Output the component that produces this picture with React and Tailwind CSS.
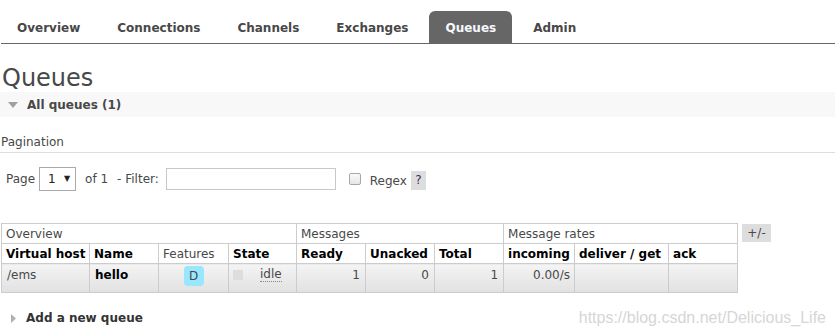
import React from "react";

const TABS = ["Overview", "Connections", "Channels", "Exchanges", "Queues", "Admin"];

function Down() {
  return (
    <svg width="10" height="6" viewBox="0 0 10 6" className="shrink-0">
      <path d="M0 0 L10 0 L5 6 Z" fill="#a0a0a0" />
    </svg>
  );
}

function Right() {
  return (
    <svg width="5" height="9" viewBox="0 0 5 9" className="shrink-0">
      <path d="M0 0 L5 4.5 L0 9 Z" fill="#b0b0b0" />
    </svg>
  );
}

export default function App() {
  const cell = "border border-[#cccccc] px-[4px] text-left";
  const data = "border border-[#cccccc] px-[5px] pt-[3px] align-top bg-linear-to-b from-[#f4f4f4] to-[#e1e1e1]";

  return (
    <div className="w-[835px] h-[333px] overflow-hidden bg-white text-[12px] leading-[16px] text-[#484848] font-['DejaVu_Sans',Verdana,sans-serif]">
      {/* tabs */}
      <nav className="pt-[11px] ml-[1px] flex gap-[5px] border-b border-[#666666]">
        {TABS.map(t => (
          <div key={t}
            className={
              "h-[32px] px-4 pt-[1px] flex items-center font-bold rounded-t-[6px] " +
              (t === "Queues" ? "bg-[#666666] text-[#f6f8ff]" : "text-[#484848]")
            }>
            {t}
          </div>
        ))}
      </nav>

      <h1 className="mt-[20px] ml-[2px] text-[24px] leading-[28px] font-normal text-[#484848]">Queues</h1>

      <div className="h-[25px] bg-[#f8f8f8] flex items-center pl-[8px] gap-[9px]">
        <Down />
        <span className="font-bold">All queues (1)</span>
      </div>

      <div className="mt-[17px] pb-[2px] pl-[1px] border-b border-[#dddddd]">Pagination</div>

      {/* pagination row */}
      <div className="mt-[14px] flex items-center h-[24px] pl-[6px]">
        <span>Page</span>
        <div className="ml-[4px] w-[37px] h-[24px] border border-[#aaaaaa] flex items-center justify-between pl-[8px] pr-[5px] text-[#222]">
          <span>1</span>
          <span className="text-[8px] leading-none">▼</span>
        </div>
        <span className="ml-[9px]">of 1</span>
        <span className="ml-[9px]">- Filter:</span>
        <div className="ml-[7px] w-[170px] h-[22px] border border-[#c8c8c8]"></div>
        <span className="ml-[13px] w-[12px] h-[12px] rounded-[2px] border border-[#a8a8a8] bg-linear-to-b from-[#fafafa] to-[#e6e6e6]"></span>
        <span className="ml-[9px] mt-[3px]">Regex</span>
        <span className="ml-[4px] mt-[2px] w-[15px] h-[19px] bg-[#dddddd] flex items-center justify-center text-[#3a2a6e]">?</span>
      </div>

      {/* table */}
      <div className="mt-[32px] ml-[1px] flex items-start gap-[4px]">
        <table className="table-fixed border-collapse w-[737px]">
          <colgroup>
            <col className="w-[88px]" />
            <col className="w-[69px]" />
            <col className="w-[70px]" />
            <col className="w-[68px]" />
            <col className="w-[69px]" />
            <col className="w-[69px]" />
            <col className="w-[69px]" />
            <col className="w-[71px]" />
            <col className="w-[94px]" />
            <col className="w-[69px]" />
          </colgroup>
          <thead>
            <tr className="h-[20px]">
              <th colSpan={4} className={cell + " font-normal"}>Overview</th>
              <th colSpan={3} className={cell + " font-normal"}>Messages</th>
              <th colSpan={3} className={cell + " font-normal"}>Message rates</th>
            </tr>
            <tr className="h-[20px] text-black">
              <th className={cell + " font-bold whitespace-nowrap"}>Virtual host</th>
              <th className={cell + " font-bold"}>Name</th>
              <th className={cell + " font-normal text-[#484848]"}>Features</th>
              <th className={cell + " font-bold"}>State</th>
              <th className={cell + " font-bold"}>Ready</th>
              <th className={cell + " font-bold"}>Unacked</th>
              <th className={cell + " font-bold"}>Total</th>
              <th className={cell + " font-bold"}>incoming</th>
              <th className={cell + " font-bold whitespace-nowrap"}>deliver / get</th>
              <th className={cell + " font-bold"}>ack</th>
            </tr>
          </thead>
          <tbody>
            <tr className="h-[29px]">
              <td className={data}>/ems</td>
              <td className={data + " font-bold text-black"}>hello</td>
              <td className={data + " text-center"}>
                <span className="inline-flex w-[20px] h-[20px] -mt-[1px] items-center justify-center rounded-[4px] bg-[#99e6ff] text-[#484848]">D</span>
              </td>
              <td className={data + " pl-[4px]"}>
                <div className="flex items-center">
                  <span className="w-[10px] h-[10px] bg-[#dddddd]"></span>
                  <span className="ml-[17px] border-b border-dotted border-[#888] leading-[14px]">idle</span>
                </div>
              </td>
              <td className={data + " text-right"}>1</td>
              <td className={data + " text-right"}>0</td>
              <td className={data + " text-right"}>1</td>
              <td className={data + " text-right pr-[4px]"}>0.00/s</td>
              <td className={data}></td>
              <td className={data}></td>
            </tr>
          </tbody>
        </table>
        <div className="mt-[1px] w-[29px] h-[18px] bg-[#dddddd] flex items-center justify-center">+/-</div>
      </div>

      {/* footer */}
      <div className="mt-[16px] flex items-center justify-between pr-[9px]">
        <div className="flex items-center pl-[11px] gap-[10px]">
          <Right />
          <span className="font-bold text-[#333]">Add a new queue</span>
        </div>
        <span className="text-[16px] leading-[18px] text-[#d6d6d6] font-['Liberation_Sans',Arial,sans-serif]">
          https://blog.csdn.net/Delicious_Life
        </span>
      </div>
    </div>
  );
}
